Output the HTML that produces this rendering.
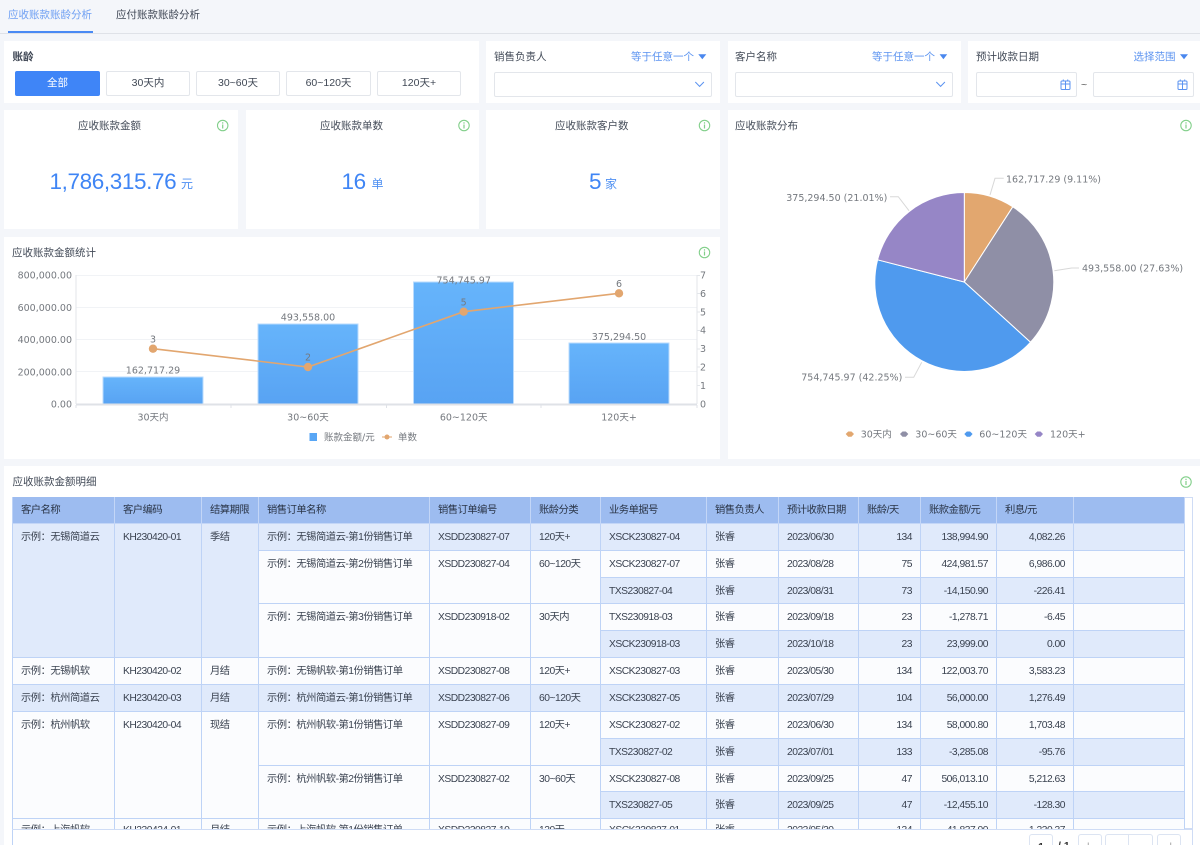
<!DOCTYPE html>
<html lang="zh-CN">
<head>
<meta charset="utf-8">
<title>应收账款账龄分析</title>
<style>
html,body{margin:0;padding:0;width:1200px;height:845px;overflow:hidden}
body{background:#f4f6fa;position:relative;font-family:"Liberation Sans","Noto Sans CJK SC",sans-serif;color:#3f4755;font-size:10.5px}
#root{position:absolute;left:0;top:0;width:1200px;height:845px;overflow:hidden;contain:paint}
.a{position:absolute;white-space:nowrap}
.p{position:absolute;background:#fff}
.b{position:absolute;box-sizing:border-box;top:71px;height:25px;border:1px solid #e3e6eb;border-radius:2px;background:#fff;text-align:center;line-height:23px;color:#3f4754}
.s{position:absolute;box-sizing:border-box;top:72px;height:25px;border:1px solid #e3e6eb;border-radius:2px;background:#fff}
.t{line-height:14px;color:#434b58}
.l{color:#5b93f0;line-height:14px}
.n{color:#3f85f5;line-height:28px;font-size:22.5px;letter-spacing:-.38px}
.u{color:#4f90f2;font-size:12px;line-height:16px}
#w{position:absolute;left:12px;top:497px;width:1181px;height:332px;overflow:hidden;background:#fff;box-shadow:0 0 0 1px #cfdcf5 inset}
table{position:absolute;left:1px;top:0;width:1172px;table-layout:fixed;border-collapse:separate;border-spacing:0;font-size:10.3px;letter-spacing:-.5px}
td,th{box-sizing:border-box;padding:6.5px 8px 0;line-height:14px;vertical-align:top;text-align:left;border-right:1px solid #bed3f6;border-bottom:1px solid #bed3f6;font-weight:400;color:#3a4250;overflow:hidden;white-space:nowrap;background:#fbfcfe}
th{background:#9dbcf0;color:#2a3547;height:27px;border-color:#c3d6f7;padding-top:7px}
.c{background:#e0eafb}
.r{text-align:right}
.z td{padding-top:5px}
.pg{position:absolute;box-sizing:border-box;top:834px;height:30px;border:1px solid #dce4f2;border-radius:3px;background:#fff;text-align:center;color:#999;line-height:24px}
</style>
</head>
<body>
<div id="root">
<div class="a" style="left:0;top:33px;width:1200px;height:1px;background:#dfe2e8"></div>
<div class="a l" style="left:8px;top:7.500px;color:#6fa0f3">应收账款账龄分析</div>
<div class="a t" style="left:116px;top:7.500px;color:#3f4755">应付账款账龄分析</div>
<div class="a" style="left:8px;top:31px;width:85px;height:2px;background:#4a8af4"></div>

<div class="p" style="left:4px;top:41px;width:475px;height:62px"></div>
<div class="p" style="left:486px;top:41px;width:234px;height:62px"></div>
<div class="p" style="left:728px;top:41px;width:233px;height:62px"></div>
<div class="p" style="left:968px;top:41px;width:232px;height:62px"></div>
<div class="p" style="left:4px;top:110px;width:234px;height:119px"></div>
<div class="p" style="left:246px;top:110px;width:233px;height:119px"></div>
<div class="p" style="left:486px;top:110px;width:234px;height:119px"></div>
<div class="p" style="left:728px;top:110px;width:472px;height:349px"></div>
<div class="p" style="left:4px;top:237px;width:716px;height:222px"></div>
<div class="p" style="left:4px;top:466px;width:1196px;height:379px"></div>

<div class="a" style="left:12.500px;top:50px;line-height:14px;font-weight:700;color:#3a4250">账龄</div>
<div class="b" style="left:15px;width:85px;background:#3f85f7;border-color:#3f85f7;color:#fff">全部</div>
<div class="b" style="left:106px;width:84px">30天内</div>
<div class="b" style="left:196px;width:84px">30~60天</div>
<div class="b" style="left:286px;width:85px">60~120天</div>
<div class="b" style="left:377px;width:84px">120天+</div>

<div class="a t" style="left:494px;top:50px">销售负责人</div>
<div class="a l" style="left:631px;top:50px">等于任意一个</div>
<div class="s" style="left:494px;width:218px"></div>
<div class="a t" style="left:735px;top:50px">客户名称</div>
<div class="a l" style="left:872px;top:50px">等于任意一个</div>
<div class="s" style="left:735px;width:218px"></div>
<div class="a t" style="left:976px;top:50px">预计收款日期</div>
<div class="a l" style="left:1133.500px;top:50px">选择范围</div>
<div class="s" style="left:976px;width:101px"></div>
<div class="a" style="left:1081px;top:78px;line-height:14px;color:#555">~</div>
<div class="s" style="left:1092.500px;width:101px"></div>

<div class="a t" style="left:78px;top:119px">应收账款金额</div>
<div class="a t" style="left:320px;top:119px">应收账款单数</div>
<div class="a t" style="left:555px;top:119px">应收账款客户数</div>
<div class="a t" style="left:735px;top:119px">应收账款分布</div>
<div class="a t" style="left:12px;top:245.500px">应收账款金额统计</div>
<div class="a t" style="left:12.500px;top:475px">应收账款金额明细</div>

<div class="a n" style="left:49.500px;top:168px">1,786,315.76</div>
<div class="a u" style="left:181px;top:176px">元</div>
<div class="a n" style="left:341.500px;top:168px">16</div>
<div class="a u" style="left:371.500px;top:176px">单</div>
<div class="a n" style="left:589px;top:168px">5</div>
<div class="a u" style="left:605px;top:176px">家</div>

<svg class="a" style="left:0;top:0" width="1200" height="845" viewBox="0 0 1200 845" xmlns="http://www.w3.org/2000/svg">
<defs>
<linearGradient id="g" x1="0" y1="0" x2="0" y2="1"><stop offset="0" stop-color="#66b4fb"/><stop offset="1" stop-color="#58a3f3"/></linearGradient>
<g id="i"><circle r="5.200" fill="none" stroke="#82cf8a" stroke-width="1.100"/><path d="M0-3.200v1.300M0-1v4" stroke="#82cf8a" stroke-width="1.200" fill="none"/></g>
<g id="cal" fill="none" stroke="#5b93f0" stroke-width="1"><rect x="-4.500" y="-3.500" width="9" height="8.500" rx="1"/><path d="M-4.500-.5h9M0-3.500v8.500M-2.200-5v2M2.200-5v2"/></g>
</defs>
<use href="#i" x="222.700" y="125.500"/><use href="#i" x="464" y="125.500"/><use href="#i" x="704.500" y="125.500"/><use href="#i" x="1186" y="125.500"/><use href="#i" x="704.500" y="252.500"/><use href="#i" x="1186" y="482"/>
<g fill="#4a87ee"><path d="M698.300 54.300h8l-4 5zM939.600 54.300h7.600l-3.800 5zM1180 54.300h8l-4 5z"/></g>
<g fill="none" stroke="#5b93f0" stroke-width="1"><path d="M695.300 82l4.300 4.400 4.300-4.400M936.300 82l4.300 4.400 4.300-4.400"/></g>
<use href="#cal" x="1065.500" y="84.500"/><use href="#cal" x="1182.500" y="84.500"/>

<!-- bar chart -->
<g stroke="#f1f3f6" stroke-width="1" fill="none"><path d="M76 275.500H697M76 307.500H697M76 339.500H697M76 371.500H697"/></g>
<path d="M76 275V404M697 275V404" stroke="#e3e6ea" stroke-width="1" fill="none"/>
<path d="M697 275.500h3M697 293.500h3M697 312h3M697 330.500h3M697 349h3M697 367h3M697 385.500h3" stroke="#e3e6ea" fill="none"/>
<g fill="url(#g)" stroke="#b9dbfd" stroke-width="1"><rect x="103" y="377" width="100" height="27"/><rect x="258" y="324" width="100" height="80"/><rect x="413.500" y="282" width="100" height="122"/><rect x="569" y="343" width="100" height="61"/></g>
<path d="M76 404.500H697" stroke="#dfe2e7" stroke-width="2" fill="none"/>
<path d="M76 405v3M231 405v3M386.500 405v3M541 405v3M697 405v3" stroke="#dfe2e7" fill="none"/>
<polyline points="153,348.700 308,367 463.700,311.700 619,293.300" fill="none" stroke="#e2a66f" stroke-width="1.600"/>
<g fill="#e2a66f"><circle cx="153" cy="348.700" r="4.200"/><circle cx="308" cy="367" r="4.200"/><circle cx="463.700" cy="311.700" r="4.200"/><circle cx="619" cy="293.300" r="4.200"/></g>
<g font-family="'DejaVu Sans','Noto Sans CJK SC',sans-serif" font-size="9.500" fill="#75797f">
<g text-anchor="end"><text x="72" y="278.500">800,000.00</text><text x="72" y="310.800">600,000.00</text><text x="72" y="343">400,000.00</text><text x="72" y="375.300">200,000.00</text><text x="72" y="407.500">0.00</text></g>
<text x="700" y="278.500">7</text><text x="700" y="296.800">6</text><text x="700" y="315.300">5</text><text x="700" y="333.700">4</text><text x="700" y="352">3</text><text x="700" y="370.500">2</text><text x="700" y="389">1</text><text x="700" y="407.500">0</text>
<g text-anchor="middle">
<text x="153" y="373.500">162,717.29</text><text x="308" y="320.500">493,558.00</text><text x="463.700" y="283.500">754,745.97</text><text x="619" y="340">375,294.50</text>
<text x="153" y="342.500">3</text><text x="308" y="360.500">2</text><text x="463.700" y="305.500">5</text><text x="619" y="287">6</text>
<text x="153" y="420.500">30天内</text><text x="308" y="420.500">30~60天</text><text x="463.700" y="420.500">60~120天</text><text x="619" y="420.500">120天+</text>
</g>
<text x="324" y="440.500">账款金额/元</text><text x="398" y="440.500">单数</text>
</g>
<rect x="309.500" y="433" width="7.500" height="8" fill="#58a6f5"/>
<path d="M382 437h10" stroke="#e2a66f" fill="none"/><circle cx="387" cy="437" r="2.500" fill="#e2a66f"/>

<!-- pie -->
<g stroke="#fff" stroke-width="1" stroke-linejoin="round">
<path d="M964.300 282V192.500A89.500 89.500 0 0 1 1012.800 206.800Z" fill="#e2a76f"/>
<path d="M964.300 282L1012.800 206.800A89.500 89.500 0 0 1 1030.500 342.200Z" fill="#8f8fa6"/>
<path d="M964.300 282L1030.500 342.200A89.500 89.500 0 0 1 877.600 259.800Z" fill="#4f9aee"/>
<path d="M964.300 282L877.600 259.800A89.500 89.500 0 0 1 964.300 192.500Z" fill="#9686c6"/>
</g>
<g fill="none" stroke="#d8d8d8" stroke-width="1">
<path d="M990 195l5-16.700h8.700M1054.300 270.700l17.400-2.700h7.300M909 210.700l-10.700-14H890M921.700 362.300l-8 15H905"/>
</g>
<g font-family="'DejaVu Sans','Noto Sans CJK SC',sans-serif" font-size="9.500" fill="#75797f">
<text x="1006" y="182.500">162,717.29 (9.11%)</text>
<text x="1082" y="271.500">493,558.00 (27.63%)</text>
<text x="887.300" y="201" text-anchor="end">375,294.50 (21.01%)</text>
<text x="902.300" y="380.500" text-anchor="end">754,745.97 (42.25%)</text>
<text x="860.700" y="437.500">30天内</text><text x="915.300" y="437.500">30~60天</text><text x="979.300" y="437.500">60~120天</text><text x="1050" y="437.500">120天+</text>
</g>
<g>
<path d="M845.700 434l2.500-2.500h3.300l2.500 2.500-2.500 2.700h-3.300z" fill="#e2a76f"/>
<path d="M900 434l2.500-2.500h3.300l2.500 2.500-2.500 2.700h-3.300z" fill="#8f8fa6"/>
<path d="M964.300 434l2.500-2.500h3.300l2.500 2.500-2.500 2.700h-3.300z" fill="#4f9aee"/>
<path d="M1034.700 434l2.500-2.500h3.300l2.500 2.500-2.500 2.700h-3.300z" fill="#9686c6"/>
</g>
</svg>

<div id="w">
<table>
<colgroup><col style="width:102px"><col style="width:87px"><col style="width:57px"><col style="width:171px"><col style="width:101px"><col style="width:70px"><col style="width:106px"><col style="width:72px"><col style="width:80px"><col style="width:62px"><col style="width:76px"><col style="width:77px"><col style="width:111px"></colgroup>
<tr><th>客户名称</th><th>客户编码</th><th>结算期限</th><th>销售订单名称</th><th>销售订单编号</th><th>账龄分类</th><th>业务单据号</th><th>销售负责人</th><th>预计收款日期</th><th>账龄/天</th><th>账款金额/元</th><th>利息/元</th><th></th></tr>
<tr style="height:27px"><td class="c" rowspan="5">示例：无锡简道云</td><td class="c" rowspan="5">KH230420-01</td><td class="c" rowspan="5">季结</td><td class="c">示例：无锡简道云-第1份销售订单</td><td class="c">XSDD230827-07</td><td class="c">120天+</td><td class="c">XSCK230827-04</td><td class="c">张睿</td><td class="c">2023/06/30</td><td class="c r">134</td><td class="c r">138,994.90</td><td class="c r">4,082.26</td><td class="c"></td></tr>
<tr style="height:27px"><td rowspan="2">示例：无锡简道云-第2份销售订单</td><td rowspan="2">XSDD230827-04</td><td rowspan="2">60~120天</td><td>XSCK230827-07</td><td>张睿</td><td>2023/08/28</td><td class="r">75</td><td class="r">424,981.57</td><td class="r">6,986.00</td><td></td></tr>
<tr style="height:26px"><td class="c">TXS230827-04</td><td class="c">张睿</td><td class="c">2023/08/31</td><td class="c r">73</td><td class="c r">-14,150.90</td><td class="c r">-226.41</td><td class="c"></td></tr>
<tr style="height:27px"><td rowspan="2">示例：无锡简道云-第3份销售订单</td><td rowspan="2">XSDD230918-02</td><td rowspan="2">30天内</td><td>TXS230918-03</td><td>张睿</td><td>2023/09/18</td><td class="r">23</td><td class="r">-1,278.71</td><td class="r">-6.45</td><td></td></tr>
<tr style="height:27px"><td class="c">XSCK230918-03</td><td class="c">张睿</td><td class="c">2023/10/18</td><td class="c r">23</td><td class="c r">23,999.00</td><td class="c r">0.00</td><td class="c"></td></tr>
<tr style="height:27px"><td>示例：无锡帆软</td><td>KH230420-02</td><td>月结</td><td>示例：无锡帆软-第1份销售订单</td><td>XSDD230827-08</td><td>120天+</td><td>XSCK230827-03</td><td>张睿</td><td>2023/05/30</td><td class="r">134</td><td class="r">122,003.70</td><td class="r">3,583.23</td><td></td></tr>
<tr style="height:27px"><td class="c">示例：杭州简道云</td><td class="c">KH230420-03</td><td class="c">月结</td><td class="c">示例：杭州简道云-第1份销售订单</td><td class="c">XSDD230827-06</td><td class="c">60~120天</td><td class="c">XSCK230827-05</td><td class="c">张睿</td><td class="c">2023/07/29</td><td class="c r">104</td><td class="c r">56,000.00</td><td class="c r">1,276.49</td><td class="c"></td></tr>
<tr style="height:27px"><td rowspan="4">示例：杭州帆软</td><td rowspan="4">KH230420-04</td><td rowspan="4">现结</td><td rowspan="2">示例：杭州帆软-第1份销售订单</td><td rowspan="2">XSDD230827-09</td><td rowspan="2">120天+</td><td>XSCK230827-02</td><td>张睿</td><td>2023/06/30</td><td class="r">134</td><td class="r">58,000.80</td><td class="r">1,703.48</td><td></td></tr>
<tr style="height:27px"><td class="c">TXS230827-02</td><td class="c">张睿</td><td class="c">2023/07/01</td><td class="c r">133</td><td class="c r">-3,285.08</td><td class="c r">-95.76</td><td class="c"></td></tr>
<tr style="height:26px"><td rowspan="2">示例：杭州帆软-第2份销售订单</td><td rowspan="2">XSDD230827-02</td><td rowspan="2">30~60天</td><td>XSCK230827-08</td><td>张睿</td><td>2023/09/25</td><td class="r">47</td><td class="r">506,013.10</td><td class="r">5,212.63</td><td></td></tr>
<tr style="height:27px"><td class="c">TXS230827-05</td><td class="c">张睿</td><td class="c">2023/09/25</td><td class="c r">47</td><td class="c r">-12,455.10</td><td class="c r">-128.30</td><td class="c"></td></tr>
<tr class="z" style="height:27px"><td>示例：上海帆软</td><td>KH230424-01</td><td>月结</td><td>示例：上海帆软-第1份销售订单</td><td>XSDD230827-10</td><td>120天</td><td>XSCK230827-01</td><td>张睿</td><td>2023/05/30</td><td class="r">134</td><td class="r">41,837.00</td><td class="r">1,230.37</td><td></td></tr>
</table>
</div>
<div class="a" style="left:12px;top:497px;width:1px;height:348px;background:#bed3f6"></div>
<div class="a" style="left:1192px;top:497px;width:1px;height:348px;background:#cfdcf5"></div>
<div class="a" style="left:12px;top:829px;width:1181px;height:1px;background:#cfdcf5"></div>
<div class="pg" style="left:1029px;width:24px;color:#333;font-weight:700">1</div>
<div class="a" style="left:1058px;top:839px;line-height:14px;color:#333;font-weight:700">/ 1</div>
<div class="pg" style="left:1078px;width:24px">|‹</div>
<div class="pg" style="left:1105px;width:24px;border-radius:3px 0 0 3px">‹</div>
<div class="pg" style="left:1128px;width:25px;border-radius:0 3px 3px 0">›</div>
<div class="pg" style="left:1157px;width:24px">›|</div>
</div>
</body>
</html>
